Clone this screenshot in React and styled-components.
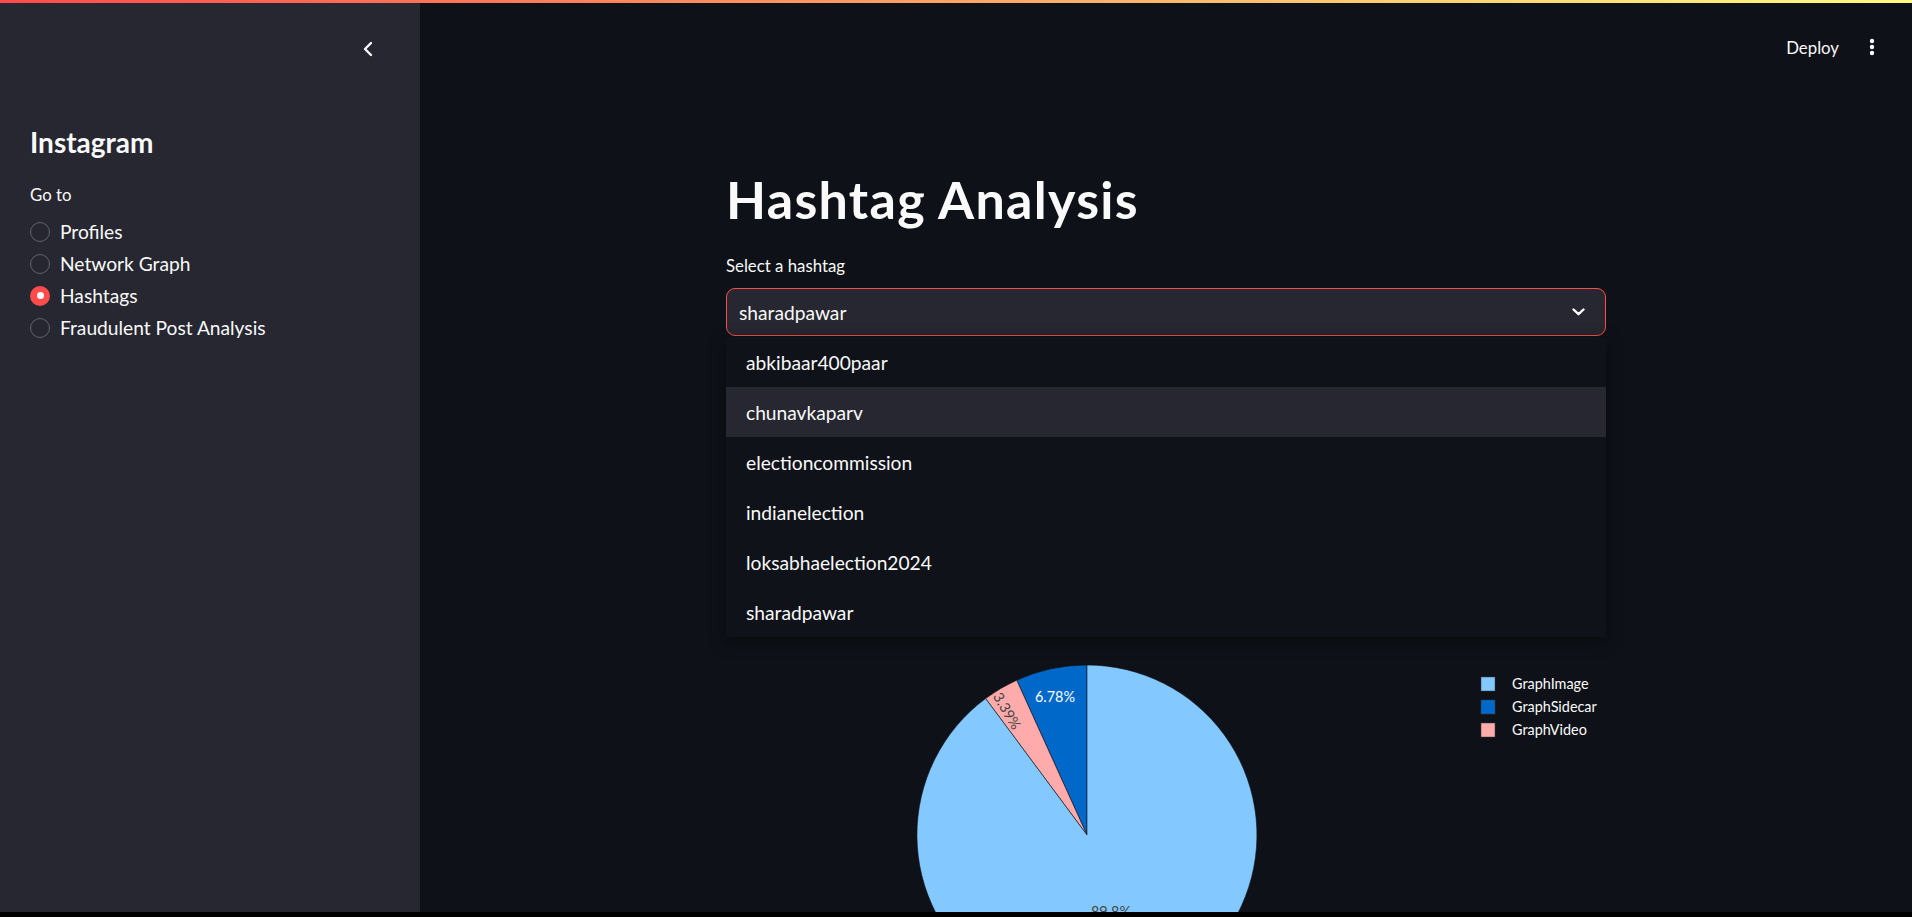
import React from 'react';
import styled, { createGlobalStyle } from 'styled-components';

const GlobalStyle = createGlobalStyle`
  html, body {
    margin: 0;
    padding: 0;
    background: #000;
    overflow: hidden;
  }
  body {
    font-family: Lato, "Noto Sans", sans-serif;
    color: #fafafa;
  }
  * { box-sizing: border-box; }
`;

const Shell = styled.div`
  width: 1912px;
  height: 912px;
  display: flex;
  flex-direction: column;
  overflow: hidden;
  background: #0e1117;
`;

const Decoration = styled.div`
  height: 3px;
  flex: none;
  background: linear-gradient(90deg, #ff4b4b, #fffd80);
`;

const Body = styled.div`
  flex: 1;
  display: flex;
  min-height: 0;
`;

const Sidebar = styled.aside`
  width: 420px;
  flex: none;
  background: #262730;
  padding: 0 30px;
  display: flex;
  flex-direction: column;
`;

const SidebarTop = styled.div`
  height: 92px;
  display: flex;
  align-items: center;
  justify-content: flex-end;
  padding-right: 6px;
`;

const IconButton = styled.button`
  background: none;
  border: 0;
  padding: 0;
  width: 32px;
  height: 32px;
  display: flex;
  align-items: center;
  justify-content: center;
  color: #fafafa;
  cursor: pointer;
`;

const Brand = styled.h2`
  margin: 31px 0 0;
  font-size: 28px;
  line-height: 1.2;
  font-weight: 700;
`;

const GroupLabel = styled.div`
  margin-top: 25px;
  font-size: 16.8px;
  line-height: 1.2;
`;

const RadioList = styled.div`
  margin-top: 11px;
  display: flex;
  flex-direction: column;
`;

const RadioRow = styled.label`
  height: 32px;
  display: flex;
  align-items: center;
  gap: 10px;
  font-size: 19.2px;
  cursor: pointer;
`;

const RadioDot = styled.span`
  width: 20px;
  height: 20px;
  border-radius: 50%;
  flex: none;
  display: flex;
  align-items: center;
  justify-content: center;
  border: ${({ $on }) => ($on ? 'none' : '1.5px solid #5f616b')};
  background: ${({ $on }) => ($on ? '#ff4b4b' : 'transparent')};
  &::after {
    content: '';
    width: 7px;
    height: 7px;
    border-radius: 50%;
    background: #fafafa;
    display: ${({ $on }) => ($on ? 'block' : 'none')};
  }
`;

const Main = styled.main`
  flex: 1;
  display: flex;
  flex-direction: column;
  min-width: 0;
`;

const Header = styled.header`
  height: 88px;
  flex: none;
  display: flex;
  align-items: center;
  justify-content: flex-end;
  gap: 17px;
  padding-right: 24px;
`;

const DeployButton = styled.button`
  background: none;
  border: 0;
  color: #fafafa;
  font-family: inherit;
  font-size: 16.8px;
  padding: 0;
  cursor: pointer;
`;

const Content = styled.div`
  width: 880px;
  margin: 0 auto;
  display: flex;
  flex-direction: column;
`;

const Title = styled.h1`
  margin: 78px 0 0;
  font-size: 52px;
  line-height: 60px;
  font-weight: 700;
  letter-spacing: 1.3px;
`;

const FieldLabel = styled.div`
  margin-top: 27px;
  font-size: 16.8px;
  line-height: 20px;
`;

const SelectWrap = styled.div`
  position: relative;
  margin-top: 12px;
`;

const SelectBox = styled.div`
  height: 48px;
  border: 1px solid #ff4b4b;
  border-radius: 9px;
  background: #262730;
  display: flex;
  align-items: center;
  justify-content: space-between;
  padding: 0 20px 0 12px;
  font-size: 19.2px;
`;

const Menu = styled.ul`
  position: absolute;
  top: calc(100% + 1px);
  left: 0;
  right: 0;
  margin: 0;
  padding: 0;
  list-style: none;
  background: #0f1219;
  box-shadow: 0 4px 16px rgba(0, 0, 0, 0.45);
  z-index: 5;
`;

const MenuItem = styled.li`
  height: 50px;
  display: flex;
  align-items: center;
  padding-left: 20px;
  font-size: 19.2px;
  background: ${({ $hover }) => ($hover ? '#262730' : 'transparent')};
`;

const Chart = styled.svg`
  display: block;
  margin-top: 304px;
  overflow: visible;
`;

const ChartText = styled.text`
  font-family: Lato, "Noto Sans", sans-serif;
  font-size: 14.4px;
`;

const hashtags = [
  'abkibaar400paar',
  'chunavkaparv',
  'electioncommission',
  'indianelection',
  'loksabhaelection2024',
  'sharadpawar',
];

const pages = ['Profiles', 'Network Graph', 'Hashtags', 'Fraudulent Post Analysis'];

const legend = [
  { label: 'GraphImage', color: '#83c9ff' },
  { label: 'GraphSidecar', color: '#0068c9' },
  { label: 'GraphVideo', color: '#ffabab' },
];

function PieChart() {
  return (
    <Chart width="880" height="300" viewBox="0 0 880 300">
      <g stroke="#0e1117" strokeWidth="0.6">
        <path d="M361 195 L361 25 A170 170 0 0 0 290.74 40.2 Z" fill="#0068c9" />
        <path d="M361 195 L290.74 40.2 A170 170 0 0 0 259.6 58.5 Z" fill="#ffabab" />
        <path d="M361 195 L259.6 58.5 A170 170 0 1 0 361 25 Z" fill="#83c9ff" />
      </g>
      <ChartText x="329" y="62" fill="#ffffff" textAnchor="middle">6.78%</ChartText>
      <ChartText
        x="0"
        y="0"
        fill="#444444"
        textAnchor="middle"
        transform="translate(281 71) rotate(59.5) translate(0 5)"
      >
        3.39%
      </ChartText>
      <ChartText x="385" y="277" fill="#444444" textAnchor="middle">89.8%</ChartText>
      {legend.map((item, i) => (
        <g key={item.label} transform={`translate(755 ${37 + i * 23})`}>
          <rect width="14" height="14" fill={item.color} stroke="#3a3d47" strokeWidth="0.5" />
          <ChartText x="31" y="12" fill="#fafafa">{item.label}</ChartText>
        </g>
      ))}
    </Chart>
  );
}

export default function App() {
  return (
    <>
      <GlobalStyle />
      <Shell>
        <Decoration />
        <Body>
          <Sidebar>
            <SidebarTop>
              <IconButton aria-label="Collapse sidebar">
                <svg width="12" height="16" viewBox="0 0 12 16" fill="none">
                  <path d="M9 2 L3 8 L9 14" stroke="#fafafa" strokeWidth="2.4" strokeLinecap="round" strokeLinejoin="round" />
                </svg>
              </IconButton>
            </SidebarTop>
            <Brand>Instagram</Brand>
            <GroupLabel>Go to</GroupLabel>
            <RadioList>
              {pages.map((p) => (
                <RadioRow key={p}>
                  <RadioDot $on={p === 'Hashtags'} />
                  {p}
                </RadioRow>
              ))}
            </RadioList>
          </Sidebar>
          <Main>
            <Header>
              <DeployButton>Deploy</DeployButton>
              <IconButton aria-label="Main menu">
                <svg width="6" height="18" viewBox="0 0 6 18" fill="#fafafa">
                  <circle cx="3" cy="3" r="2.2" />
                  <circle cx="3" cy="9" r="2.2" />
                  <circle cx="3" cy="15" r="2.2" />
                </svg>
              </IconButton>
            </Header>
            <Content>
              <Title>Hashtag Analysis</Title>
              <FieldLabel>Select a hashtag</FieldLabel>
              <SelectWrap>
                <SelectBox>
                  <span>sharadpawar</span>
                  <svg width="13" height="8" viewBox="0 0 13 8" fill="none">
                    <path d="M1.5 1.5 L6.5 6.2 L11.5 1.5" stroke="#fafafa" strokeWidth="2.4" strokeLinecap="round" strokeLinejoin="round" />
                  </svg>
                </SelectBox>
                <Menu>
                  {hashtags.map((h) => (
                    <MenuItem key={h} $hover={h === 'chunavkaparv'}>{h}</MenuItem>
                  ))}
                </Menu>
              </SelectWrap>
              <PieChart />
            </Content>
          </Main>
        </Body>
      </Shell>
    </>
  );
}
